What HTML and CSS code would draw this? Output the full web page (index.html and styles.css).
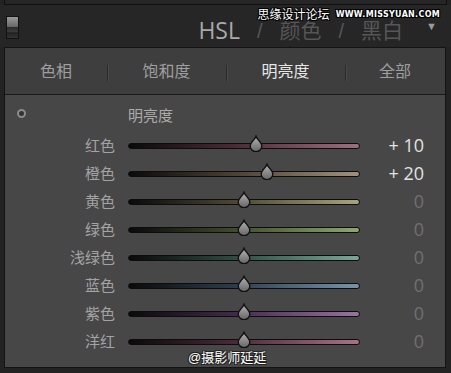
FILE: index.html
```html
<!DOCTYPE html>
<html lang="zh-CN">
<head>
	<meta charset="UTF-8">
	<title>HSL / 明亮度</title>
	<link rel="stylesheet" href="styles.css">
</head>
<body>
	<div id="frame">
		<!-- 上一个面板的底边 -->
		<div class="prev_edge"></div>
		<!-- 标题栏 -->
		<div class="header">
			<span class="switch"></span>
			<div class="title">
				<span class="on">HSL</span>
				<span class="slash">/</span>
				<span>颜色</span>
				<span class="slash">/</span>
				<span>黑白</span>
				<span class="arrow">▼</span>
			</div>
			<div class="mark_top"><span class="cn">思缘设计论坛</span><span class="en">WWW.MISSYUAN.COM</span></div>
		</div>
		<!-- 面板 -->
		<div class="panel">
			<ul class="tabs">
				<li>色相</li>
				<li>饱和度</li>
				<li class="active">明亮度</li>
				<li>全部</li>
			</ul>
			<div class="body">
				<div class="caption">
					<span class="target"></span>
					<span class="name">明亮度</span>
				</div>
				<div class="row red">
					<label>红色</label>
					<div class="track"><i class="thumb" style="left: 55%"></i></div>
					<span class="value plus">+ 10</span>
				</div>
				<div class="row orange">
					<label>橙色</label>
					<div class="track"><i class="thumb" style="left: 60%"></i></div>
					<span class="value plus">+ 20</span>
				</div>
				<div class="row yellow">
					<label>黄色</label>
					<div class="track"><i class="thumb" style="left: 50%"></i></div>
					<span class="value">0</span>
				</div>
				<div class="row green">
					<label>绿色</label>
					<div class="track"><i class="thumb" style="left: 50%"></i></div>
					<span class="value">0</span>
				</div>
				<div class="row aqua">
					<label>浅绿色</label>
					<div class="track"><i class="thumb" style="left: 50%"></i></div>
					<span class="value">0</span>
				</div>
				<div class="row blue">
					<label>蓝色</label>
					<div class="track"><i class="thumb" style="left: 50%"></i></div>
					<span class="value">0</span>
				</div>
				<div class="row purple">
					<label>紫色</label>
					<div class="track"><i class="thumb" style="left: 50%"></i></div>
					<span class="value">0</span>
				</div>
				<div class="row magenta">
					<label>洋红</label>
					<div class="track"><i class="thumb" style="left: 50%"></i></div>
					<span class="value">0</span>
				</div>
			</div>
			<div class="mark_bottom">@摄影师延延</div>
		</div>
	</div>
</body>
</html>
```
FILE: styles.css
```css
/*reset*/
body, div, ul, li, span, label, i{
	margin: 0;
	padding: 0;
}
li{
	list-style: none;
}
body{
	width: 451px;
	height: 373px;
	overflow: hidden;
	background: #232323;
	font: 16px/1.2 "Liberation Sans", "Noto Sans CJK SC", sans-serif;
	color: #a6a6a6;
}
#frame{
	display: flex;
	flex-direction: column;
	height: 373px;
}
/*上一个面板*/
.prev_edge{
	height: 4px;
	margin: 0 4px 0 4px;
	border: 1px solid #101010;
	border-top: none;
	background: #262626;
}
/*标题栏*/
.header{
	position: relative;
	display: flex;
	align-items: center;
	justify-content: space-between;
	height: 42px;
	padding: 0 14px 0 6px;
	background: #262626;
}
.switch{
	display: block;
	width: 11px;
	height: 21px;
	border: 1px solid #111;
	background: linear-gradient(#9a9a9a, #6a6a6a 45%, #2e2e2e 50%, #3a3a3a 70%, #222 75%, #333);
	margin-top: 3px;
}
.title{
	display: flex;
	align-items: center;
	gap: 17px;
	color: #565656;
	font-size: 21px;
	line-height: 1;
	margin-top: 9px;
}
.title .on{
	color: #a9a9a9;
	font-family: "Open Sans", "Liberation Sans", sans-serif;
	font-size: 23px;
}
.title .slash{
	font-size: 20px;
}
.title .arrow{
	font-size: 11px;
	color: #9a9a9a;
	margin-left: 6px;
	margin-top: -8px;
}
.mark_top{
	position: absolute;
	right: 11px;
	top: 4px;
	display: flex;
	align-items: center;
	gap: 6px;
	line-height: 12px;
	color: #fff;
	text-shadow: 0 0 1px #000, 1px 1px 0 #000, -1px -1px 0 #000, 1px -1px 0 #000, -1px 1px 0 #000;
}
.mark_top .cn{
	font-size: 12px;
}
.mark_top .en{
	font: bold 8px/12px "DejaVu Sans", sans-serif;
	letter-spacing: 0.3px;
}
/*面板*/
.panel{
	position: relative;
	flex: 1;
	margin: 0 5px 5px 4px;
	border: 1px solid #141414;
	background: #474747;
	display: flex;
	flex-direction: column;
}
.tabs{
	display: grid;
	grid-template-columns: 102px 119px 119px 1fr;
	height: 46px;
	background: #3e3e3e;
	border-bottom: 1px solid #1a1a1a;
}
.tabs li{
	position: relative;
	display: flex;
	align-items: center;
	justify-content: center;
	color: #9e9e9e;
	padding-top: 2px;
}
.tabs li + li::before{
	content: "";
	position: absolute;
	left: 0;
	top: 17px;
	width: 1px;
	height: 16px;
	background: #2a2a2a;
	box-shadow: 1px 0 0 #4a4a4a;
}
.tabs .active{
	color: #e6e6e6;
}
/*滑块区*/
.body{
	display: flex;
	flex-direction: column;
	padding: 11px 0 0;
}
.caption{
	display: grid;
	grid-template-columns: 110px 1fr;
	column-gap: 13px;
	align-items: center;
	height: 20px;
	margin-bottom: 6px;
}
.caption .name{
	color: #ababab;
	font-size: 15px;
}
.target{
	justify-self: start;
	width: 5px;
	height: 5px;
	margin: -5px 0 0 12px;
	border: 2px solid #8c8c8c;
	border-radius: 50%;
	background: #333;
}
.row{
	display: grid;
	grid-template-columns: 110px 232px 51px;
	column-gap: 13px;
	align-items: center;
	height: 28px;
}
.row label{
	text-align: right;
	color: #a3a3a3;
	font-size: 15px;
}
.track{
	position: relative;
	height: 4px;
	border: 1px solid #0d0d0d;
	border-radius: 3px;
}
.thumb{
	position: absolute;
	top: -9px;
	width: 14px;
	height: 17px;
	margin-left: -7px;
	background: url("data:image/svg+xml,%3Csvg xmlns='http://www.w3.org/2000/svg' viewBox='0 0 14 17'%3E%3ClinearGradient id='g' x1='0' y1='0' x2='0' y2='1'%3E%3Cstop offset='0' stop-color='%23b4b4b4'/%3E%3Cstop offset='1' stop-color='%23656565'/%3E%3C/linearGradient%3E%3Cpath d='M7 1.2C8 4.5 12.8 7.5 12.8 11A5.8 5.8 0 0 1 1.2 11C1.2 7.5 6 4.5 7 1.2Z' fill='url(%23g)' stroke='%23111' stroke-width='1.4'/%3E%3C/svg%3E") no-repeat;
}
.value{
	text-align: right;
	color: #707070;
	font-size: 18px;
	font-family: "Open Sans", "Liberation Sans", sans-serif;
}
.value.plus{
	color: #e2e2e2;
}
.red .track{ background: linear-gradient(to right, #0a0a0a, #4a2a32 45%, #a06f7c); }
.orange .track{ background: linear-gradient(to right, #0a0a0a, #4a3f32 45%, #a2927c); }
.yellow .track{ background: linear-gradient(to right, #0a0a0a, #4a4630 45%, #a8a47a); }
.green .track{ background: linear-gradient(to right, #0a0a0a, #3c4a2c 45%, #8fa872); }
.aqua .track{ background: linear-gradient(to right, #0a0a0a, #2c4a42 45%, #78a89a); }
.blue .track{ background: linear-gradient(to right, #0a0a0a, #2c3c4c 45%, #7694ac); }
.purple .track{ background: linear-gradient(to right, #0a0a0a, #42284a 45%, #9a72a4); }
.magenta .track{ background: linear-gradient(to right, #0a0a0a, #4a2838 45%, #a87288); }
/*水印*/
.mark_bottom{
	position: absolute;
	left: 183px;
	bottom: 1px;
	color: #fff;
	font-size: 13px;
	text-shadow: 1px 1px 0 #222, -1px -1px 0 #222, 1px -1px 0 #222, -1px 1px 0 #222;
}
```
